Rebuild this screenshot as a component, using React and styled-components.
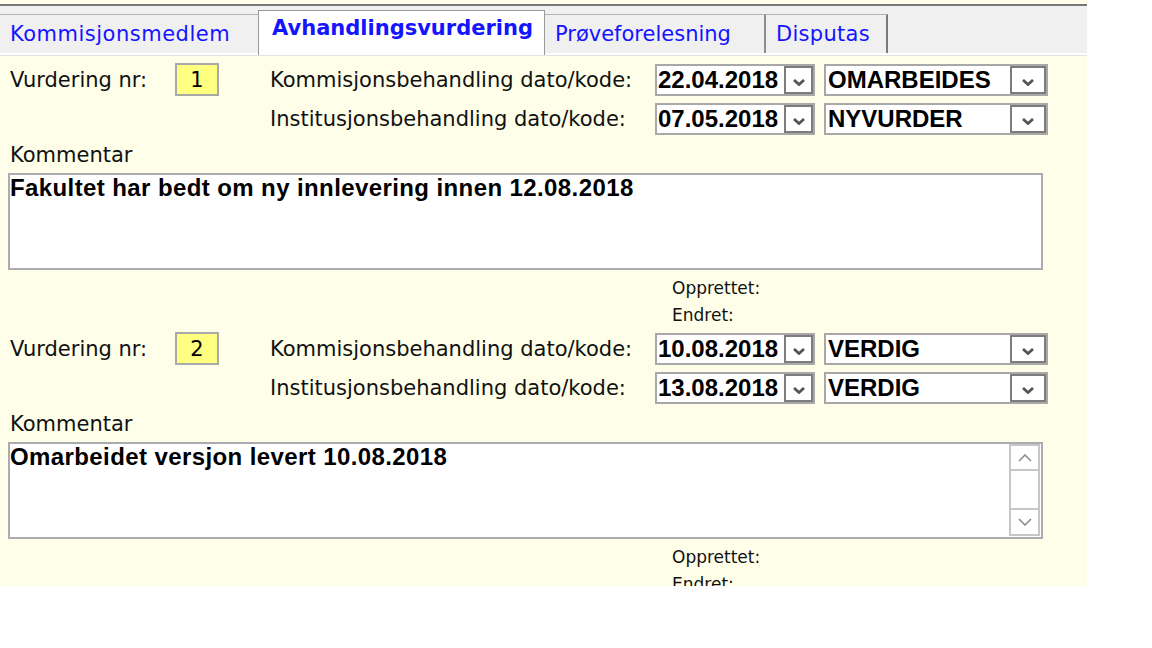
import React from 'react';
import styled, { createGlobalStyle } from 'styled-components';

const GlobalStyle = createGlobalStyle`
  html, body {
    margin: 0;
    padding: 0;
    background: #ffffff;
  }
  body {
    font-family: "DejaVu Sans", Verdana, sans-serif;
  }
`;

const Panel = styled.div`
  width: 1087px;
  height: 586px;
  overflow: hidden;
  box-sizing: border-box;
  padding-top: 4px;
  background: #ffffe9;
`;

const TabBar = styled.div`
  display: flex;
  align-items: flex-end;
  height: 47px;
  background: #f0f0f0;
  border-top: 2px solid #787878;
  border-bottom: 2px solid #ffffff;
  box-shadow: 0 1px 0 #e2e2e2;
`;

const Tab = styled.div`
  box-sizing: border-box;
  width: ${p => p.$w}px;
  height: ${p => (p.$active ? 45 : 39)}px;
  margin-bottom: ${p => (p.$active ? -2 : 0)}px;
  padding: ${p => (p.$active ? '5px 0 0 13px' : '7px 0 0 10px')};
  background: ${p => (p.$active ? '#ffffff' : '#f0f0f0')};
  border-top: 1px solid ${p => (p.$active ? '#9a9a9a' : '#b4b4b4')};
  border-left: ${p => (p.$active ? '1px solid #9a9a9a' : 'none')};
  border-right: ${p => p.$edge || 'none'};
  font-size: 21px;
  line-height: 24px;
  letter-spacing: ${p => p.$spacing || 0}px;
  font-weight: ${p => (p.$active ? 700 : 400)};
  color: #1414ff;
  white-space: nowrap;
`;

const Content = styled.div`
  padding-top: 8px;
`;

const Block = styled.section`
  display: flex;
  flex-direction: column;
`;

const FieldRow = styled.div`
  display: grid;
  grid-template-columns: 165px 95px 385px 169px 224px;
  align-items: center;
  height: 32px;
  padding-left: 10px;

  & + & {
    margin-top: 8px;
  }
`;

const Label = styled.span`
  font-size: 21px;
  line-height: 24px;
  color: #111;
  white-space: nowrap;
`;

const NumberBox = styled.div`
  box-sizing: border-box;
  width: 44px;
  height: 33px;
  display: flex;
  align-items: center;
  justify-content: center;
  border: 2px solid #a9a9a9;
  background: #ffff80;
  font-size: 21px;
  color: #000;
`;

const Combo = styled.div`
  box-sizing: border-box;
  width: ${p => p.$w}px;
  height: 32px;
  display: flex;
  border: 2px solid #a8a8a8;
  background: #ffffff;
`;

const ComboValue = styled.div`
  flex: 1;
  display: flex;
  align-items: center;
  padding-left: ${p => p.$pad || 1}px;
  font-family: "Liberation Sans", Arial, sans-serif;
  font-weight: 700;
  font-size: 24px;
  color: #000;
  white-space: nowrap;
  overflow: hidden;
`;

const DropButton = styled.div`
  box-sizing: border-box;
  width: ${p => p.$w}px;
  display: flex;
  align-items: center;
  justify-content: center;
  padding-top: 5px;
  border: 2px solid #7c7c7c;
  background: #ffffff;
`;

const CommentLabel = styled.div`
  margin-top: 8px;
  padding-left: 10px;
  font-size: 21px;
  line-height: 24px;
  color: #111;
`;

const CommentBox = styled.div`
  box-sizing: border-box;
  width: 1035px;
  height: 97px;
  margin: 6px 0 0 8px;
  display: flex;
  border: 2px solid #ababb2;
  background: #ffffff;
`;

const CommentText = styled.div`
  flex: 1;
  font-family: "Liberation Sans", Arial, sans-serif;
  font-weight: 700;
  font-size: 24px;
  line-height: 26px;
  letter-spacing: 0.4px;
  color: #000;
`;

const ScrollBar = styled.div`
  width: 31px;
  margin: 0 1px 1px 0;
  display: flex;
  flex-direction: column;
`;

const ScrollButton = styled.div`
  box-sizing: border-box;
  height: ${p => p.$h}px;
  display: flex;
  align-items: center;
  justify-content: center;
  border: 2px solid #c6c6c6;
  background: #ffffff;
`;

const ScrollTrack = styled.div`
  flex: 1;
  border-left: 2px solid #c6c6c6;
  border-right: 2px solid #c6c6c6;
`;

const Meta = styled.div`
  margin: 5px 0 3px;
  padding-left: 672px;
  font-size: 17px;
  line-height: 27px;
  color: #111;
`;

const Chevron = ({ up, thin }) => (
  <svg width={thin ? 14 : 12} height={thin ? 8 : 7} viewBox={thin ? '0 0 14 8' : '0 0 12 7'}>
    <path
      d={thin ? (up ? 'M1 7 L7 1 L13 7' : 'M1 1 L7 7 L13 1') : 'M1 1 L6 5.5 L11 1'}
      fill="none"
      stroke={thin ? '#8c8c8c' : '#555555'}
      strokeWidth={thin ? 1.6 : 2.8}
    />
  </svg>
);

const ComboField = ({ value, width, button, pad }) => (
  <Combo $w={width}>
    <ComboValue $pad={pad}>{value}</ComboValue>
    <DropButton $w={button}>
      <Chevron />
    </DropButton>
  </Combo>
);

const assessments = [
  {
    nr: 1,
    kommisjon: { dato: '22.04.2018', kode: 'OMARBEIDES' },
    institusjon: { dato: '07.05.2018', kode: 'NYVURDER' },
    kommentar: 'Fakultet har bedt om ny innlevering innen 12.08.2018',
    scroll: false,
  },
  {
    nr: 2,
    kommisjon: { dato: '10.08.2018', kode: 'VERDIG' },
    institusjon: { dato: '13.08.2018', kode: 'VERDIG' },
    kommentar: 'Omarbeidet versjon levert 10.08.2018',
    scroll: true,
  },
];

const tabs = [
  { label: 'Kommisjonsmedlem', w: 258, spacing: 0.5 },
  { label: 'Avhandlingsvurdering', w: 287, active: true, edge: '1px solid #9a9a9a' },
  { label: 'Prøveforelesning', w: 221, edge: '2px solid #8c8c8c' },
  { label: 'Disputas', w: 122, edge: '2px solid #7a7a7a', spacing: 0.3 },
];

const Assessment = ({ item }) => (
  <Block>
    <FieldRow>
      <Label>Vurdering nr:</Label>
      <NumberBox>{item.nr}</NumberBox>
      <Label>Kommisjonsbehandling dato/kode:</Label>
      <ComboField value={item.kommisjon.dato} width={160} button={29} />
      <ComboField value={item.kommisjon.kode} width={224} button={36} pad={2} />
    </FieldRow>
    <FieldRow>
      <span />
      <span />
      <Label>Institusjonsbehandling dato/kode:</Label>
      <ComboField value={item.institusjon.dato} width={160} button={29} />
      <ComboField value={item.institusjon.kode} width={224} button={36} pad={2} />
    </FieldRow>
    <CommentLabel>Kommentar</CommentLabel>
    <CommentBox>
      <CommentText>{item.kommentar}</CommentText>
      {item.scroll && (
        <ScrollBar>
          <ScrollButton $h={27}>
            <Chevron thin up />
          </ScrollButton>
          <ScrollTrack />
          <ScrollButton $h={28}>
            <Chevron thin />
          </ScrollButton>
        </ScrollBar>
      )}
    </CommentBox>
    <Meta>
      <div>Opprettet:</div>
      <div>Endret:</div>
    </Meta>
  </Block>
);

const App = () => {
  return (
    <>
      <GlobalStyle />
      <Panel>
        <TabBar>
          {tabs.map(t => (
            <Tab key={t.label} $w={t.w} $active={t.active} $edge={t.edge} $spacing={t.spacing}>
              {t.label}
            </Tab>
          ))}
        </TabBar>
        <Content>
          {assessments.map(a => (
            <Assessment key={a.nr} item={a} />
          ))}
        </Content>
      </Panel>
    </>
  );
};

export default App;
